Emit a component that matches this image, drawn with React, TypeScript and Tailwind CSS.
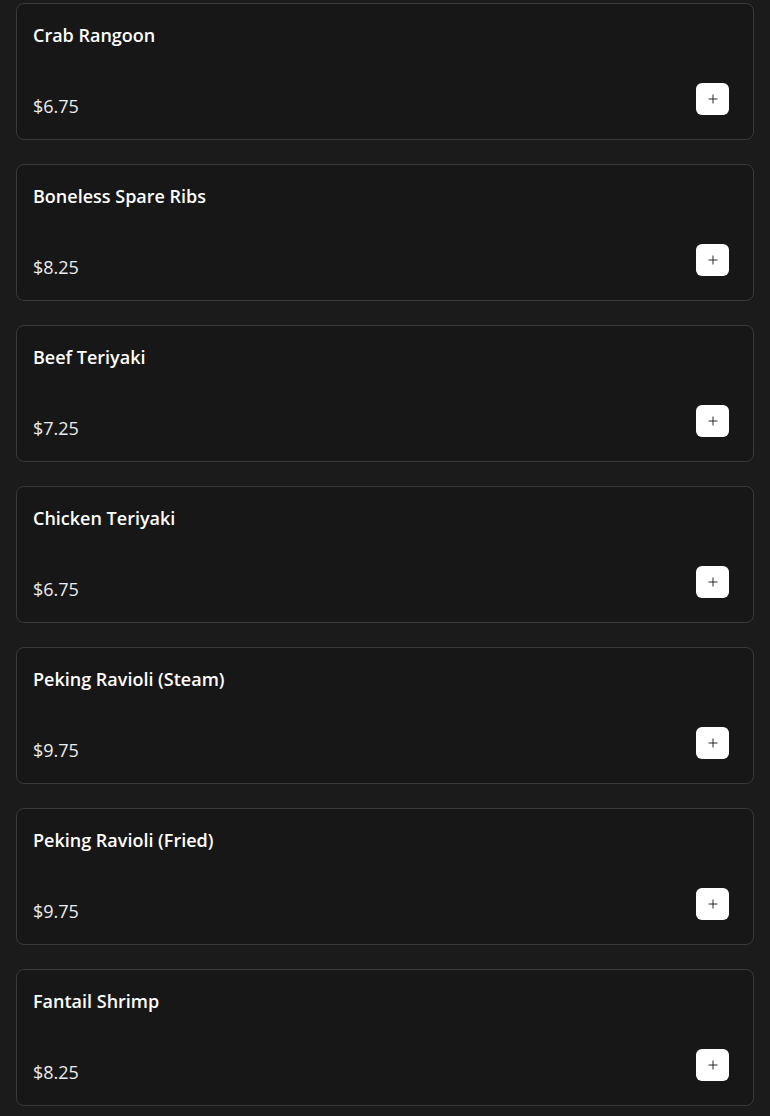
import { Plus } from "lucide-react";

type Item = {
  name: string;
  price: string;
};

const items: Item[] = [
  { name: "Crab Rangoon", price: "$6.75" },
  { name: "Boneless Spare Ribs", price: "$8.25" },
  { name: "Beef Teriyaki", price: "$7.25" },
  { name: "Chicken Teriyaki", price: "$6.75" },
  { name: "Peking Ravioli (Steam)", price: "$9.75" },
  { name: "Peking Ravioli (Fried)", price: "$9.75" },
  { name: "Fantail Shrimp", price: "$8.25" },
];

function MenuCard({ item }: { item: Item }) {
  return (
    <div className="flex h-[137px] flex-col justify-between rounded-lg border border-[#3a3a3a] bg-[#171717] pl-4 pr-6 pt-[17px] pb-[19px]">
      <h3 className="text-[18px] font-semibold leading-7 text-white">{item.name}</h3>
      <div className="flex items-end justify-between">
        <p className="text-[18px] leading-7 text-[#ececec]">{item.price}</p>
        <button className="mb-[5px] flex h-8 w-[33px] items-center justify-center rounded-md bg-white text-[#1a1a1a]">
          <Plus size={14} strokeWidth={1.6} />
        </button>
      </div>
    </div>
  );
}

export default function App() {
  return (
    <div
      className="min-h-screen bg-[#1b1b1b] px-4 pt-[3px] pb-6"
      style={{ fontFamily: '"Open Sans", "Noto Sans", sans-serif' }}
    >
      <div className="flex flex-col gap-6">
        {items.map((item) => (
          <MenuCard key={item.name} item={item} />
        ))}
      </div>
    </div>
  );
}
